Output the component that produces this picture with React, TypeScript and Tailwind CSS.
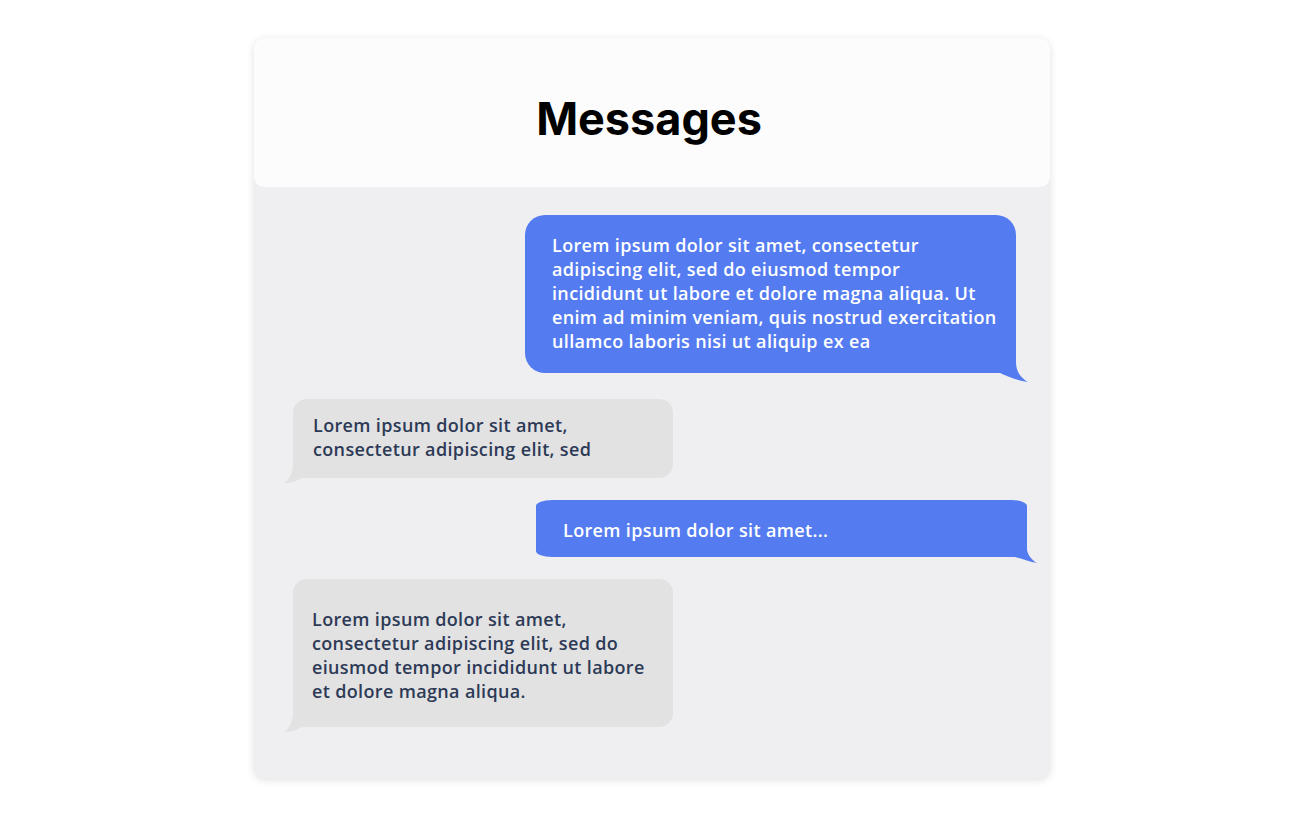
import React from "react";

const font = { fontFamily: "'Open Sans', 'Noto Sans', sans-serif" };

function TailRight({ color }: { color: string }) {
  return (
    <svg className="absolute right-[-12px] bottom-[-9px]" width="40" height="30" viewBox="0 0 40 30">
      <path d="M0 0 L28 0 L28 10 C28 20 33 26 40 30 C31 29 21 25 12 21 L0 21 Z" fill={color} />
    </svg>
  );
}

function TailRightSmall({ color }: { color: string }) {
  return (
    <svg className="absolute right-[-10px] bottom-[-6px]" width="36" height="22" viewBox="0 0 36 22">
      <path d="M0 0 L26 0 L26 8 C26 12 30 19 36 22 C29 21 22 18 14 16 L0 16 Z" fill={color} />
    </svg>
  );
}

function TailLeft({ color }: { color: string }) {
  return (
    <svg className="absolute left-[-9px] bottom-[-5px]" width="30" height="25" viewBox="0 0 30 25">
      <path d="M9 0 L30 0 L30 20 L20 20 C15 20 13 25 0 25 C5 22 9 14 9 5 Z" fill={color} />
    </svg>
  );
}

export default function App() {
  return (
    <div className="min-h-screen bg-white flex justify-center pt-[38px]" style={font}>
      <div className="w-[796px] h-[740px] rounded-[10px] bg-[#efeff1] shadow-[0_2px_8px_rgba(0,0,0,0.12)] flex flex-col">
        <div className="h-[149px] rounded-[10px] bg-[#fcfcfc] flex items-center justify-center pt-[11px] pr-[6px]">
          <h1 className="text-[45px] leading-none font-bold text-black" style={{ fontFamily: "Inter, 'Liberation Sans', sans-serif" }}>
            Messages
          </h1>
        </div>
        <div className="flex flex-col pt-[28px] text-[18px] leading-[24px] font-semibold tracking-[0.35px]">
          <div className="relative self-end mr-[34px] w-[491px] rounded-[20px] rounded-br-none bg-[#547cf0] pl-[27px] pr-[8px] pt-[18px] pb-[20px] text-white">
            Lorem ipsum dolor sit amet, consectetur<br />
            adipiscing elit, sed do eiusmod tempor<br />
            incididunt ut labore et dolore magna aliqua. Ut<br />
            enim ad minim veniam, quis nostrud exercitation<br />
            ullamco laboris nisi ut aliquip ex ea
            <TailRight color="#547cf0" />
          </div>
          <div className="relative self-start ml-[39px] mt-[26px] w-[380px] rounded-[14px] rounded-bl-none bg-[#e2e2e3] pl-[20px] pr-[4px] pt-[14px] pb-[17px] text-[#2d3a56]">
            Lorem ipsum dolor sit amet,<br />
            consectetur adipiscing elit, sed
            <TailLeft color="#e2e2e3" />
          </div>
          <div className="relative self-end mr-[23px] mt-[22px] w-[491px] rounded-[16px/6px] rounded-br-none bg-[#547cf0] pl-[27px] pt-[18px] pb-[15px] text-white">
            Lorem ipsum dolor sit amet...
            <TailRightSmall color="#547cf0" />
          </div>
          <div className="relative self-start ml-[39px] mt-[22px] w-[380px] rounded-[14px] rounded-bl-none bg-[#e2e2e3] pl-[19px] pr-[4px] pt-[28px] pb-[24px] text-[#2d3a56]">
            Lorem ipsum dolor sit amet,<br />
            consectetur adipiscing elit, sed do<br />
            eiusmod tempor incididunt ut labore<br />
            et dolore magna aliqua.
            <TailLeft color="#e2e2e3" />
          </div>
        </div>
      </div>
    </div>
  );
}
